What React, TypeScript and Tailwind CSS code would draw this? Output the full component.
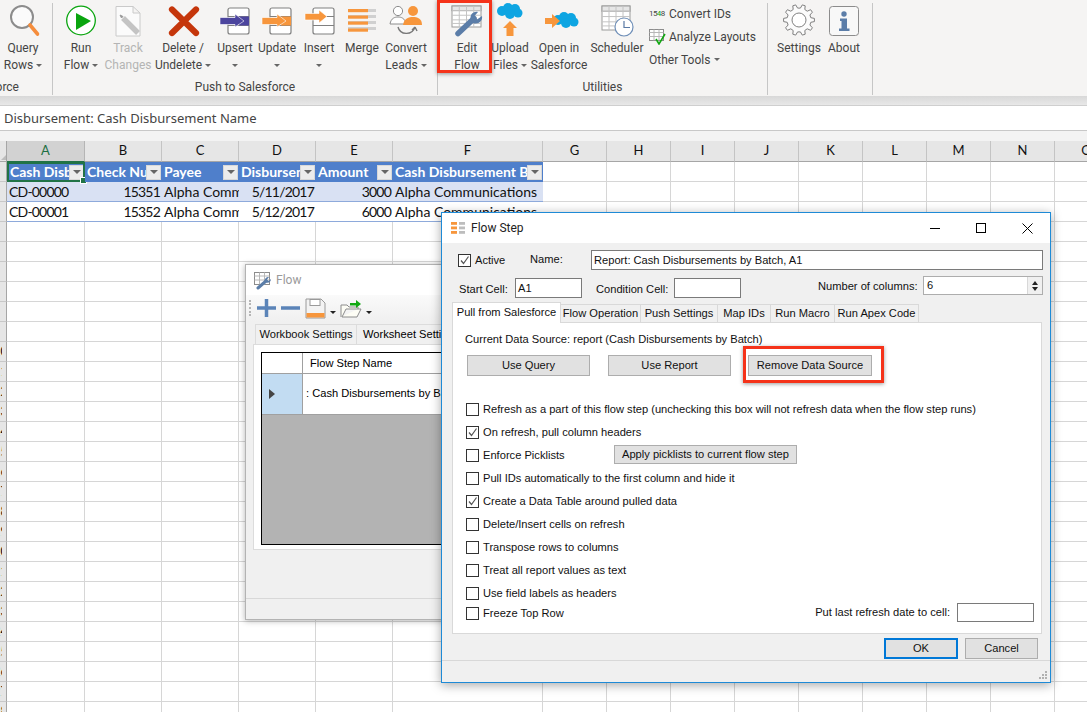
import React from "react";

const gearPath = (() => {
  const cx = 22, cy = 20, n = 10;
  const pts: string[] = [];
  for (let i = 0; i < n; i++) {
    const a = (i / n) * Math.PI * 2;
    const s = Math.PI / n;
    const p = (r: number, t: number) => `${(cx + r * Math.cos(t)).toFixed(1)} ${(cy + r * Math.sin(t)).toFixed(1)}`;
    pts.push(p(12, a - s * 0.62), p(15.5, a - s * 0.32), p(15.5, a + s * 0.32), p(12, a + s * 0.62));
  }
  return "M" + pts.join("L") + "Z";
})();

function Caret({ className = "" }: { className?: string }) {
  return <span className={`inline-block w-0 h-0 border-l-[3px] border-r-[3px] border-t-[3px] border-l-transparent border-r-transparent border-t-[#666] align-middle ${className}`} />;
}

function Item({ w, icon, l1, l2, caret, off, children }: { w: string; icon: React.ReactNode; l1: string; l2?: string; caret?: boolean; off?: boolean; children?: React.ReactNode }) {
  return (
    <div className={`relative shrink-0 flex flex-col items-center ${w} ${off ? "text-[#b4b4b4]" : "text-[#444]"}`}>
      <div className="h-[40px] w-full">{icon}</div>
      <div className="h-[17px] leading-[17px] whitespace-nowrap">{l1}</div>
      <div className="h-[17px] leading-[17px] whitespace-nowrap flex items-center gap-[3px]">
        {l2}
        {caret && <Caret />}
      </div>
      {children}
    </div>
  );
}

const Sep = () => <div className="w-px h-[92px] mt-[3px] bg-[#c6c6c6] shrink-0" />;

function Svg({ w, children }: { w: number; children: React.ReactNode }) {
  return (
    <svg width={w} height={40} viewBox={`0 0 ${w} 40`} className="block">
      {children}
    </svg>
  );
}

function Stack({ x }: { x: number }) {
  return (
    <g fill="none" stroke="#808080" strokeWidth="1.2">
      <rect x={x} y="8" width="21" height="26" rx="2" fill="#fff" />
      <path d={`M${x} 16.5H${x + 21}M${x} 25.5H${x + 21}`} />
    </g>
  );
}

function SheetIcon({ x, y, w, h }: { x: number; y: number; w: number; h: number }) {
  const cols = [1, 2, 3].map((i) => x + (w * i) / 4);
  const rows = [0.22, 0.44, 0.66, 0.83].map((f) => y + h * f);
  return (
    <g fill="none" stroke="#9b9b9b" strokeWidth="1">
      <rect x={x} y={y} width={w} height={h} fill="#fff" />
      <rect x={x} y={y} width={w} height={h * 0.22} fill="#e6e6e6" />
      {cols.map((c) => <path key={c} d={`M${c} ${y}V${y + h}`} stroke="#c4c4c4" />)}
      {rows.map((r) => <path key={r} d={`M${x} ${r}H${x + w}`} stroke="#c4c4c4" />)}
    </g>
  );
}

function Cloud({ dx, dy, s = 1 }: { dx: number; dy: number; s?: number }) {
  return (
    <g transform={`translate(${dx} ${dy}) scale(${s})`} fill="#0ea5e2">
      <circle cx="6" cy="8" r="5" />
      <circle cx="12" cy="5" r="5" />
      <circle cx="19" cy="6" r="5" />
      <circle cx="22" cy="10" r="4.5" />
      <circle cx="14" cy="11" r="5" />
    </g>
  );
}

function Ribbon() {
  return (
    <div className="h-[96px] bg-[#f5f4f3] flex text-[12px] [font-family:Roboto,sans-serif] text-[#444]">
      <div className="w-[52px] shrink-0 flex flex-col">
        <Item
          w="w-[46px]"
          l1="Query"
          l2="Rows"
          caret
          icon={
            <Svg w={46}>
              <circle cx="22" cy="17" r="11" fill="#fbfbfb" stroke="#8c8c8c" strokeWidth="2" />
              <path d="M30 25L37.5 34" stroke="#f58d3c" strokeWidth="3.6" strokeLinecap="round" />
            </Svg>
          }
        />
        <div className="h-[19px] mt-[4px] overflow-hidden flex justify-end pr-[33px] leading-[19px] whitespace-nowrap">Pull from Salesforce</div>
      </div>
      <Sep />
      <div className="w-[384px] shrink-0 flex flex-col">
        <div className="flex pl-[4px]">
          <Item w="w-[48px]" l1="Run" l2="Flow" caret icon={
            <Svg w={48}>
              <circle cx="24" cy="20.5" r="14.3" fill="#fff" stroke="#0aa50f" strokeWidth="1.3" />
              <path d="M19 13L34 21L19 30Z" fill="#0aa50f" />
            </Svg>
          } />
          <Item w="w-[46px]" l1="Track" l2="Changes" off icon={
            <Svg w={46}>
              <path d="M11 6.5H28L35 13V36H11Z M28 6.5V13H35" fill="#fbfbfb" stroke="#cacaca" />
              <path d="M18 18L33 33" stroke="#c4c4c4" strokeWidth="5.5" />
              <path d="M15 15L18 16.5L16.5 18Z" fill="#9a9a9a" stroke="#9a9a9a" />
            </Svg>
          } />
          <Item w="w-[64px]" l1="Delete /" l2="Undelete" caret icon={
            <Svg w={64}>
              <path d="M21 9.5L45 33M45 9.5L21 33" stroke="#c5360b" strokeWidth="6.2" strokeLinecap="round" />
            </Svg>
          } />
          <Item w="w-[40px]" l1="Upsert" caret icon={
            <Svg w={40}>
              <Stack x={13} />
              <rect x="24" y="16.5" width="10" height="9" fill="#4c459e" />
              <path d="M5 17.5H20V14L29 21L20 27V24.5H5Z" fill="#4c459e" stroke="#fff" strokeWidth=".6" />
            </Svg>
          } />
          <Item w="w-[44px]" l1="Update" caret icon={
            <Svg w={44}>
              <Stack x={15} />
              <rect x="26" y="16.5" width="10" height="9" fill="#f7963c" />
              <path d="M7 17.5H22V14L31 21L22 27V24.5H7Z" fill="#f7963c" stroke="#fff" strokeWidth=".6" />
            </Svg>
          } />
          <Item w="w-[40px]" l1="Insert" caret icon={
            <Svg w={40}>
              <Stack x={14} />
              <path d="M6 13.5H20V10L28 16.5L20 23V20H6Z" fill="#f7963c" stroke="#fff" strokeWidth=".6" />
            </Svg>
          } />
          <Item w="w-[46px]" l1="Merge" icon={
            <Svg w={46}>
              {[10, 16, 22, 28].map((y) => <rect key={y} x="9" y={y - 1} width="28" height="3" fill="#d0d0d0" />)}
              {[9, 15.5, 21.5, 28.5].map((y) => <rect key={y} x="9" y={y} width="20" height="3.2" fill="#f7963c" />)}
            </Svg>
          } />
          <Item w="w-[42px]" l1="Convert" l2="Leads" caret icon={
            <Svg w={42}>
              <circle cx="13" cy="11" r="4.6" fill="#fff" stroke="#8c8c8c" />
              <path d="M5 24C6 18 10 17 13 17S20 18 21 24Z" fill="#fff" stroke="#8c8c8c" />
              <circle cx="28" cy="11" r="5" fill="#f7963c" />
              <path d="M18 25C19 18 24 17 28 17S37 18 37 25Z" fill="#f7963c" />
              <path d="M13 27C15 35 27 36 30 27M30 27L27 30M30 27L32 31" fill="none" stroke="#777" strokeWidth="1.4" />
            </Svg>
          } />
        </div>
        <div className="h-[19px] mt-[4px] text-center leading-[19px]">Push to Salesforce</div>
      </div>
      <Sep />
      <div className="w-[329px] shrink-0 flex flex-col">
        <div className="flex pl-[7px]">
          <Item w="w-[44px]" l1="Edit" l2="Flow" icon={
            <Svg w={44}>
              <SheetIcon x={7} y={6} w={29} h={21} />
              <path d="M13 33.5L29 18.5" stroke="#5b7da8" strokeWidth="5.5" strokeLinecap="round" />
              <path d="M26 21C24 15 28 11 33 12L29.5 16L32 19.5L37 16C38 21 33 25 28 23Z" fill="#5b7da8" />
            </Svg>
          }>
            <div className="absolute left-[-8px] top-0 w-[55px] h-[73px] border-[3px] border-[#f5331a] shadow-[0_1px_4px_rgba(0,0,0,0.4)]" />
          </Item>
          <Item w="w-[42px]" l1="Upload" l2="Files" caret icon={
            <Svg w={42}>
              <Cloud dx={7} dy={3} />
              <path d="M21 21L28 28H24.500V36H17.500V28H14Z" fill="#f7963c" />
            </Svg>
          } />
          <Item w="w-[56px]" l1="Open in" l2="Salesforce" icon={
            <Svg w={56}>
              <Cloud dx={21} dy={12} s={1} />
              <path d="M14 18H21V14L29 21L21 28V24H14Z" fill="#f7963c" />
            </Svg>
          } />
          <Item w="w-[60px]" l1="Scheduler" icon={
            <Svg w={60}>
              <SheetIcon x={15} y={6} w={28} h={24} />
              <circle cx="37" cy="27" r="9" fill="#fff" stroke="#6f8fb8" strokeWidth="1.2" />
              <path d="M37 21V27.500H43" fill="none" stroke="#5a7aa5" strokeWidth="1.2" />
            </Svg>
          } />
          <div className="w-[118px] shrink-0 pl-[2px] flex flex-col">
            <div className="h-[23px] mt-[2px] flex items-center gap-[5px]">
              <span className="w-[15px] text-[8px] tracking-[-0.6px] whitespace-nowrap">15<span className="text-[#0aa50f]">4</span>8</span>
              <span>Convert IDs</span>
            </div>
            <div className="h-[23px] flex items-center gap-[3px]">
              <svg width="17" height="16" viewBox="0 0 17 16">
                <rect x=".5" y=".5" width="14" height="11" fill="#fff" stroke="#8c8c8c" />
                <path d="M.5 3.500H14.500M.5 7.500H14.500M5 .5V11.500M10 .5V11.500" stroke="#b8b8b8" />
                <path d="M7 10L10 15L16 5" fill="none" stroke="#12a812" strokeWidth="1.6" />
              </svg>
              <span className="whitespace-nowrap">Analyze Layouts</span>
            </div>
            <div className="h-[23px] flex items-center gap-[4px]">
              Other Tools <Caret />
            </div>
          </div>
        </div>
        <div className="h-[19px] mt-[4px] text-center leading-[19px]">Utilities</div>
      </div>
      <Sep />
      <div className="flex pl-[7px]">
        <Item w="w-[48px]" l1="Settings" icon={
          <Svg w={48}>
            <path d={gearPath} transform="translate(2 0)" fill="#fbfbfb" stroke="#808080" strokeWidth="1" />
            <circle cx="24" cy="20" r="7" fill="#fff" stroke="#808080" strokeWidth="1" />
          </Svg>
        } />
        <Item w="w-[42px]" l1="About" icon={
          <Svg w={42}>
            <rect x="6.500" y="6.500" width="29" height="29" rx="3" fill="#f8f8f8" stroke="#8c8c8c" />
            <circle cx="21" cy="14" r="2.700" fill="#5b7da8" />
            <path d="M17 18.500H24V28.500H26.500V31H16V28.500H18.500V21H17Z" fill="#5b7da8" />
          </Svg>
        } />
        <div className="w-[7px]" />
        <Sep />
      </div>
    </div>
  );
}

const heads: [string, string, string][] = [
  ["Cash Disbursement Name", "CD-00000", "CD-00001"],
  ["Check Number", "15351", "15352"],
  ["Payee", "Alpha Communications", "Alpha Communications"],
  ["Disbursement Date", "5/11/2017", "5/12/2017"],
  ["Amount", "3000", "6000"],
  ["Cash Disbursement Batch", "Alpha Communications", "Alpha Communications"],
];
const letters = "ABCDEFGHIJKLMNO".split("");

function FilterBtn() {
  return (
    <span className="shrink-0 w-[15px] h-[15px] bg-[#ececec] border border-[#d8d8d8] flex items-center justify-center">
      <span className="w-0 h-0 border-l-[4px] border-r-[4px] border-t-[4px] border-l-transparent border-r-transparent border-t-[#666]" />
    </span>
  );
}

function Sheet() {
  const numeric = [1, 4];
  const dates = 3;
  return (
    <div className="grid grid-cols-[7px_78px_77px_77px_77px_77px_150px_repeat(9,64px)] grid-rows-[21px] auto-rows-[20px] [font-family:Lato,sans-serif] text-[14px] text-[#111]">
      <div className="bg-[#e6e6e6] border-b border-r border-[#a6a6a6] relative">
        <span className="absolute right-0 bottom-[1px] w-0 h-0 border-l-[5px] border-b-[5px] border-l-transparent border-b-[#bdbdbd]" />
      </div>
      {letters.map((l, i) => (
        <div key={l} className={`flex items-center justify-center border-b border-r text-[13px] ${i === 0 ? "bg-[#d2d2d2] border-r-[#b5b5b5] border-b-[#217346] text-[#1d6f42]" : "bg-[#e6e6e6] border-r-[#c4c4c4] border-b-[#a6a6a6]"}`}>
          {l}
        </div>
      ))}
      {Array.from({ length: 28 }, (_, r) => (
        <React.Fragment key={r}>
          <div className="bg-[#e6e6e6] border-r border-b border-r-[#a6a6a6] border-b-[#c8c8c8] overflow-hidden">
            {r >= 9 && (
              <div className="w-[2px] h-full overflow-hidden text-[13px] leading-[19px]">
                <span className="inline-block ml-[-7px] whitespace-nowrap">{r + 1}</span>
              </div>
            )}
          </div>
          {letters.map((l, c) => {
            if (c < 6 && r === 0) {
              return (
                <div key={l} className="relative bg-[#4f7fcb] text-white font-bold flex items-center pl-[2px] pr-[1px] min-w-0">
                  <span className={`flex-1 overflow-hidden whitespace-nowrap pb-[1px] ${c === 0 ? "pl-[1px]" : ""}`}>{heads[c][0]}</span>
                  <FilterBtn />
                  {c === 0 && (
                    <>
                      <span className="absolute inset-0 border-2 border-[#217346]" />
                      <span className="absolute right-[-2px] bottom-[-2px] w-[5px] h-[5px] bg-[#217346] border border-white box-content" />
                    </>
                  )}
                </div>
              );
            }
            if (c < 6 && (r === 1 || r === 2)) {
              const align = numeric.includes(c) || c === dates;
              const tight = c !== 2 && c !== 5;
              return (
                <div key={l} className={`border-b border-b-[#8eaadb] flex items-center px-[2px] overflow-hidden min-w-0 whitespace-nowrap ${r === 1 ? "bg-[#d9e1f3]" : "bg-white"} ${align ? "justify-end" : ""} ${tight ? "tracking-[-0.8px]" : ""}`}>
                  {heads[c][r]}
                </div>
              );
            }
            return <div key={l} className="bg-white border-r border-b border-[#d6d6d6]" />;
          })}
        </React.Fragment>
      ))}
    </div>
  );
}

function FlowWindow() {
  return (
    <div className="absolute left-[245px] top-[264px] w-[240px] h-[356px] bg-[#f0f0f0] border border-[#b3b3b3] shadow-[0_1px_6px_rgba(0,0,0,0.3)] flex flex-col [font-family:Liberation_Sans,sans-serif] text-[11.130px] text-black">
      <div className="h-[30px] bg-white flex items-center pl-[8px] gap-[3px]">
        <svg width="19" height="19" viewBox="0 0 19 19">
          <rect x=".5" y="1.500" width="15" height="12" fill="#fff" stroke="#8c8c8c" />
          <path d="M.5 5H15.500M.5 9H15.500M5.500 1.500V13.500M10.500 1.500V13.500" stroke="#b8b8b8" />
          <path d="M4 17L12 10" stroke="#5b7da8" strokeWidth="3" strokeLinecap="round" />
          <path d="M11 11C10 8 12 6 15 6L13 8.500L14.500 10L17 8C17 11 14 13 11 11Z" fill="#5b7da8" />
        </svg>
        <span className="text-[12px] text-[#9a9a9a] [font-family:Roboto,sans-serif]">Flow</span>
      </div>
      <div className="h-[26px] bg-gradient-to-b from-[#fafafa] to-[#f0f0f0] flex items-center pl-[3px]">
        <span className="w-[2px] h-[16px] mr-[5px] border-l-2 border-dotted border-[#b5b5b5]" />
        <svg width="118" height="24" viewBox="0 0 118 24">
          <path d="M1 12H20M10.500 3V21" stroke="#5b84b8" strokeWidth="3.500" />
          <path d="M25 12H44" stroke="#5b84b8" strokeWidth="3.500" />
          <path d="M50 3H65L69 7V22H50Z" fill="#f3f3f3" stroke="#9a9a9a" />
          <rect x="54" y="3.500" width="10" height="6" fill="#fff" stroke="#9a9a9a" />
          <rect x="50.500" y="17" width="18" height="4.500" fill="#f7963c" />
          <path d="M74 15H80L77 18Z" fill="#222" />
          <path d="M85 21V9H91L93 11H102V13H90L86 21H101L105 13H102" fill="#fdfdf5" stroke="#8c8c8c" />
          <path d="M94 7H100V4L105 8L100 12V9.500H94Z" fill="#12a812" />
          <path d="M110 15H116L113 18Z" fill="#222" />
        </svg>
      </div>
      <div className="h-[20px] mt-[3px] flex pl-[9px]">
        <div className="w-[102px] text-center whitespace-nowrap bg-[#f0f0f0] border-t border-r border-l border-[#dcdcdc] leading-[19px] text-[#111]">Workbook Settings</div>
        <div className="pl-[6px] whitespace-nowrap leading-[19px] border-t border-[#dcdcdc]">Worksheet Settings</div>
      </div>
      <div className="ml-[7px] h-[206px] bg-white border border-[#dcdcdc] pl-[7px] pt-[7px]">
        <div className="h-[193px] bg-[#b3b3b3] border border-black border-r-0 flex flex-col">
          <div className="h-[21px] bg-white border-b border-[#a0a0a0] flex">
            <div className="w-[41px] border-r border-[#a0a0a0]" />
            <div className="pl-[7px] leading-[20px] whitespace-nowrap">Flow Step Name</div>
          </div>
          <div className="h-[41px] bg-white border-b border-[#a0a0a0] flex">
            <div className="w-[41px] bg-[#c2dcf2] flex items-center pl-[7px] border-r border-[#a0a0a0]">
              <span className="w-0 h-0 border-l-[6px] border-y-[5px] border-y-transparent border-l-[#444]" />
            </div>
            <div className="pl-[3px] pb-[1px] flex items-center whitespace-nowrap overflow-hidden">: Cash Disbursements by Batch, A1</div>
          </div>
        </div>
      </div>
      <div className="h-[48px]" />
      <div className="flex-1 border-t border-[#d8d8d8]" />
    </div>
  );
}

function Check({ on }: { on?: boolean }) {
  return (
    <span className="shrink-0 w-[13px] h-[13px] border border-[#333] bg-white flex items-center justify-center">
      {on && (
        <svg width="11" height="11" viewBox="0 0 11 11">
          <path d="M2 5.500L4.500 8.500L9.500 1.500" fill="none" stroke="#555" strokeWidth="1.200" />
        </svg>
      )}
    </span>
  );
}

function Row({ on, t, children }: { on?: boolean; t: string; children?: React.ReactNode }) {
  return (
    <div className="h-[23px] flex items-center gap-[4px]">
      <Check on={on} />
      <span className="whitespace-nowrap">{t}</span>
      {children}
    </div>
  );
}

const btn = "h-[21px] bg-[#e1e1e1] border border-[#adadad] flex items-center justify-center whitespace-nowrap";

function FlowStep() {
  const tabs: [string, string][] = [
    ["Flow Operation", "w-[80px]"],
    ["Push Settings", "w-[77px]"],
    ["Map IDs", "w-[53px]"],
    ["Run Macro", "w-[64px]"],
    ["Run Apex Code", "w-[84px]"],
  ];
  return (
    <div className="absolute left-[441px] top-[212px] w-[610px] h-[471px] bg-[#f0f0f0] border border-[#1e8ad6] shadow-[0_2px_10px_rgba(0,0,0,0.35)] flex flex-col [font-family:Liberation_Sans,sans-serif] text-[11.130px] text-[#111]">
      <div className="h-[30px] bg-white flex items-center pl-[9px] shrink-0">
        <svg width="15" height="14" viewBox="0 0 15 14" className="mr-[5px]">
          {[1, 5.500, 10].map((y) => (
            <g key={y}>
              <rect x="0" y={y} width="6" height="2.800" fill="#f7963c" />
              <rect x="8" y={y} width="6" height="2.800" fill="#bdbdbd" />
            </g>
          ))}
        </svg>
        <span className="text-[12px] [font-family:Roboto,sans-serif] text-[#222]">Flow Step</span>
        <div className="ml-auto flex items-center">
          <span className="w-[46px] flex justify-center"><span className="w-[10px] h-px bg-black" /></span>
          <span className="w-[46px] flex justify-center"><span className="w-[10px] h-[10px] border border-black" /></span>
          <span className="w-[46px] flex justify-center">
            <svg width="11" height="11" viewBox="0 0 11 11"><path d="M.5 .5L10.500 10.500M10.500 .5L.5 10.500" stroke="#000" /></svg>
          </span>
        </div>
      </div>
      <div className="h-[20px] mt-[7px] flex items-center pl-[16px] shrink-0">
        <Check on />
        <span className="ml-[4px] w-[55px]">Active</span>
        <span className="w-[61px] -mt-[2px]">Name:</span>
        <span className="w-[452px] h-[20px] bg-white border border-[#7a7a7a] pl-[2px] leading-[18px]">Report: Cash Disbursements by Batch, A1</span>
      </div>
      <div className="h-[22px] mt-[6px] flex items-start pl-[17px] shrink-0">
        <span className="mt-[5px] w-[56px]">Start Cell:</span>
        <span className="mt-[2px] w-[67px] h-[20px] bg-white border border-[#7a7a7a] pl-[2px] leading-[18px]">A1</span>
        <span className="mt-[5px] ml-[14px] w-[78px] whitespace-nowrap">Condition Cell:</span>
        <span className="mt-[2px] w-[67px] h-[20px] bg-white border border-[#7a7a7a]" />
        <span className="mt-[2px] ml-[77px] w-[105px] whitespace-nowrap">Number of columns:</span>
        <span className="w-[120px] h-[19px] bg-white border border-[#adadad] flex pl-[3px] leading-[16px]">
          6
          <span className="ml-auto w-[15px] flex flex-col items-center justify-center gap-[2px] bg-[#f0f0f0] border-l border-[#d8d8d8]">
            <span className="w-0 h-0 border-l-[3px] border-r-[3px] border-b-[4px] border-l-transparent border-r-transparent border-b-[#222]" />
            <span className="w-0 h-0 border-l-[3px] border-r-[3px] border-t-[4px] border-l-transparent border-r-transparent border-t-[#222]" />
          </span>
        </span>
      </div>
      <div className="h-[20px] mt-[4px] flex items-end pl-[10px] shrink-0 relative z-10">
        <div className="w-[109px] h-[21px] mb-[-1px] bg-white border border-b-0 border-[#d9d9d9] flex items-center justify-center whitespace-nowrap pb-[2px]">Pull from Salesforce</div>
        {tabs.map(([t, w]) => (
          <div key={t} className={`${w} h-[18px] border-t border-r border-[#d9d9d9] flex items-center justify-center whitespace-nowrap`}>{t}</div>
        ))}
      </div>
      <div className="ml-[10px] w-[590px] h-[312px] bg-white border border-[#d9d9d9] pl-[12px] shrink-0 flex flex-col">
        <div className="h-[32px] pt-[8px] whitespace-nowrap">Current Data Source: report (Cash Disbursements by Batch)</div>
        <div className="flex pl-[2px]">
          <div className={`${btn} w-[123px]`}>Use Query</div>
          <div className={`${btn} w-[123px] ml-[18px]`}>Use Report</div>
          <div className="relative ml-[17px]">
            <div className={`${btn} w-[124px]`}>Remove Data Source</div>
            <div className="absolute left-[-5px] top-[-9px] w-[141px] h-[37px] border-[3px] border-[#f5331a] shadow-[0_1px_4px_rgba(0,0,0,0.4)]" />
          </div>
        </div>
        <div className="h-[22px]" />
        <div className="pl-[1px] flex flex-col">
          <Row t="Refresh as a part of this flow step (unchecking this box will not refresh data when the flow step runs)" />
          <Row on t="On refresh, pull column headers" />
          <div className="h-[23px] flex items-center gap-[4px]">
            <Check />
            <span className="w-[127px] whitespace-nowrap">Enforce Picklists</span>
            <span className="h-[19px] w-[183px] bg-[#e1e1e1] border border-[#adadad] flex items-center justify-center whitespace-nowrap -mt-[3px]">Apply picklists to current flow step</span>
          </div>
          <Row t="Pull IDs automatically to the first column and hide it" />
          <Row on t="Create a Data Table around pulled data" />
          <Row t="Delete/Insert cells on refresh" />
          <Row t="Transpose rows to columns" />
          <Row t="Treat all report values as text" />
          <Row t="Use field labels as headers" />
          <div className="h-[17px] flex items-center gap-[4px]">
            <Check />
            <span className="whitespace-nowrap">Freeze Top Row</span>
            <span className="ml-auto whitespace-nowrap -mt-[3px]">Put last refresh date to cell:</span>
            <span className="ml-[3px] mr-[7px] w-[77px] h-[19px] bg-white border border-[#7a7a7a] -mt-[3px]" />
          </div>
        </div>
      </div>
      <div className="flex justify-end pr-[12px] gap-[7px] mt-[4px] shrink-0">
        <div className="w-[74px] h-[21px] bg-[#e1e1e1] border-2 border-[#0078d7] flex items-center justify-center">OK</div>
        <div className={`${btn} w-[73px]`}>Cancel</div>
      </div>
      <div className="mt-[1px] flex-1 border-t border-[#d8d8d8] flex items-end justify-end pr-[2px] pb-[2px]">
        <svg width="10" height="10" viewBox="0 0 10 10" fill="#b0b0b0">
          <rect x="7" y="1" width="2" height="2" /><rect x="4" y="4" width="2" height="2" /><rect x="7" y="4" width="2" height="2" />
          <rect x="1" y="7" width="2" height="2" /><rect x="4" y="7" width="2" height="2" /><rect x="7" y="7" width="2" height="2" />
        </svg>
      </div>
    </div>
  );
}

export default function App() {
  return (
    <div className="relative w-[1087px] h-[712px] overflow-hidden bg-white">
      <Ribbon />
      <div className="h-[10px] bg-gradient-to-b from-[#d8d8d8] to-[#e8e8e8] border-b border-[#cfcfcf]" />
      <div className="h-[25px] bg-white border-b border-[#c8c8c8] pl-[4px] text-[13px] leading-[25px] text-[#444] [font-family:Noto_Sans,sans-serif] whitespace-nowrap">
        Disbursement: Cash Disbursement Name
      </div>
      <div className="h-[10px] bg-[#f3f3f3]" />
      <Sheet />
      <FlowWindow />
      <FlowStep />
    </div>
  );
}
